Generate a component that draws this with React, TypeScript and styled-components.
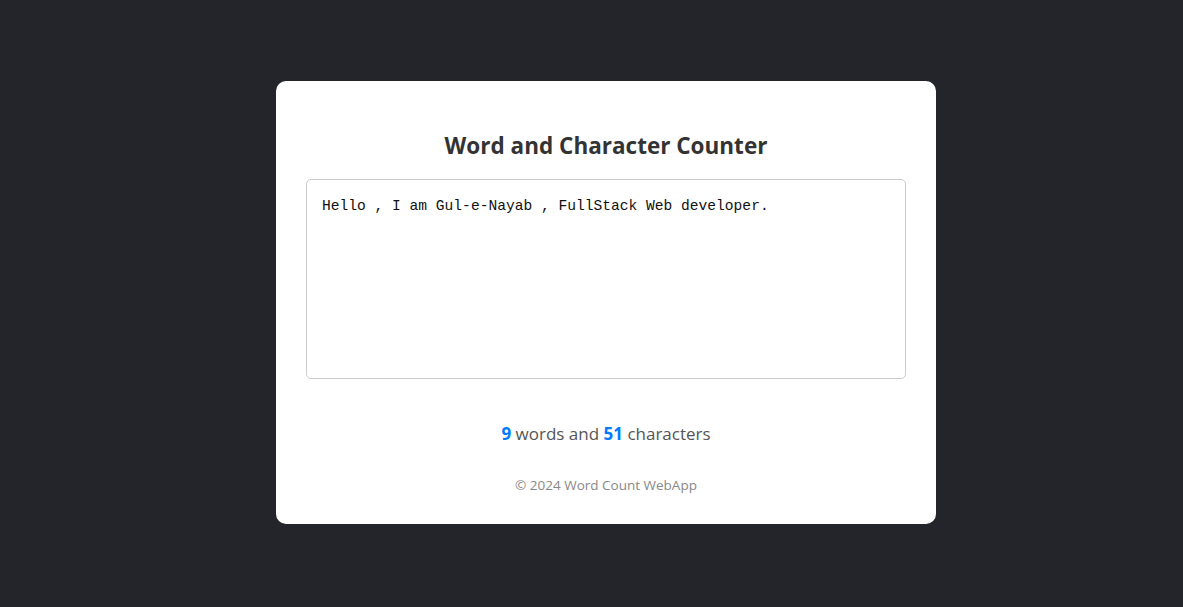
import { useState } from "react";
import styled, { createGlobalStyle } from "styled-components";

const GlobalStyle = createGlobalStyle`
  html, body {
    margin: 0;
    padding: 0;
    background: #24252a;
    font-family: "Open Sans", "Noto Sans", Arial, sans-serif;
  }
`;

const countWords = (text: string) =>
  text.trim() === "" ? 0 : text.trim().split(/\s+/).length;

const App = () => {
  const [text, setText] = useState(
    "Hello , I am Gul-e-Nayab , FullStack Web developer."
  );

  return (
    <>
      <GlobalStyle />
      <Page>
        <Card>
          <Title>Word and Character Counter</Title>
          <TextBox
            value={text}
            onChange={(e) => setText(e.target.value)}
            spellCheck={false}
          />
          <Summary>
            <Count>{countWords(text)}</Count> words and{" "}
            <Count>{text.length}</Count> characters
          </Summary>
          <Footer>© 2024 Word Count WebApp</Footer>
        </Card>
      </Page>
    </>
  );
};

export default App;

const Page = styled("div")`
  min-height: 607px;
  display: flex;
  justify-content: center;
  align-items: flex-start;
  padding: 81px 0 0 29px;
  box-sizing: border-box;
`;

const Card = styled("div")`
  width: 660px;
  height: 443px;
  box-sizing: border-box;
  background: #ffffff;
  border-radius: 10px;
  padding: 50px 30px 0;
  display: flex;
  flex-direction: column;
  align-items: center;
`;

const Title = styled("h2")`
  margin: 0 0 18px;
  font-size: 22.5px;
  line-height: 30px;
  font-weight: 700;
  color: #333333;
`;

const TextBox = styled("textarea")`
  width: 600px;
  height: 200px;
  box-sizing: border-box;
  border: 1px solid #cccccc;
  border-radius: 5px;
  padding: 16px 15px;
  resize: none;
  outline: none;
  font-family: "Liberation Mono", "DejaVu Sans Mono", monospace;
  font-size: 14.6px;
  line-height: 20px;
  color: #111111;
`;

const Summary = styled("p")`
  margin: 43px 0 0;
  font-size: 17px;
  line-height: 24px;
  color: #555555;
`;

const Count = styled("span")`
  color: #007bff;
  font-weight: 700;
`;

const Footer = styled("p")`
  margin: 30px 0 0;
  font-size: 13.5px;
  line-height: 18px;
  color: #888888;
`;
